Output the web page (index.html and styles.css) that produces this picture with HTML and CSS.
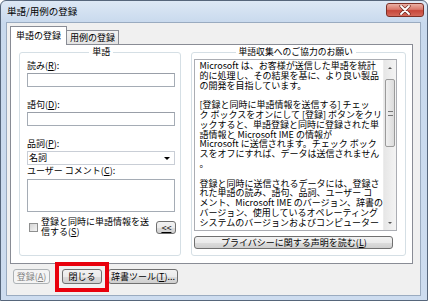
FILE: index.html
```html
<!DOCTYPE html>
<html lang="ja">
<head>
  <meta charset="UTF-8">
  <title>単語/用例の登録</title>
  <link rel="stylesheet" href="styles.css">
</head>
<body>

  <!-- Dialog window -->
  <div class="window">
    <div class="titlebar">
      <span class="title">単語/用例の登録</span>
      <button class="close-btn">
        <svg width="12" height="10" viewBox="0 0 12 10">
          <path d="M2 1 L10 9 M10 1 L2 9" stroke="#6b2a22" stroke-width="3.2" stroke-linecap="round"/>
          <path d="M2 1 L10 9 M10 1 L2 9" stroke="#fff" stroke-width="1.8" stroke-linecap="round"/>
        </svg>
      </button>
    </div>

    <div class="client">
      <!-- Tabs -->
      <div class="tabs">
        <div class="tab active">単語の登録</div>
        <div class="tab">用例の登録</div>
      </div>

      <div class="panel">
        <!-- Word group -->
        <fieldset class="group word-group">
          <legend>単語</legend>
          <label class="field-label">読み(<u>R</u>):</label>
          <input type="text" class="text-input">
          <label class="field-label">語句(<u>D</u>):</label>
          <input type="text" class="text-input">
          <label class="field-label">品詞(<u>P</u>):</label>
          <div class="combo"><span>名詞</span><span class="combo-arrow"></span></div>
          <label class="field-label">ユーザー コメント(<u>C</u>):</label>
          <textarea class="memo"></textarea>
          <div class="send-row">
            <span class="checkbox"></span>
            <span class="send-label">登録と同時に単語情報を送信する(<u>S</u>)</span>
            <button class="btn small-btn"><u>&lt;&lt;</u></button>
          </div>
        </fieldset>

        <!-- Info group -->
        <fieldset class="group info-group">
          <legend>単語収集へのご協力のお願い</legend>
          <div class="info-box">
            <div class="info-text">
              Microsoft は、お客様が送信した単語を統計<br>
              的に処理し、その結果を基に、より良い製品<br>
              の開発を目指しています。<br>
              <br>
              [登録と同時に単語情報を送信する] チェッ<br>
              ク ボックスをオンにして [登録] ボタンをクリ<br>
              ックすると、単語登録と同時に登録された単<br>
              語情報と Microsoft IME の情報が<br>
              Microsoft に送信されます。チェック ボック<br>
              スをオフにすれば、データは送信されません<br>
              。<br>
              <br>
              登録と同時に送信されるデータには、登録さ<br>
              れた単語の読み、語句、品詞、ユーザー コ<br>
              メント、Microsoft IME のバージョン、辞書の<br>
              バージョン、使用しているオペレーティング<br>
              システムのバージョンおよびコンピューター
            </div>
            <div class="scrollbar">
              <div class="sb-arrow up"></div>
              <div class="sb-track"><div class="sb-thumb"></div></div>
              <div class="sb-arrow down"></div>
            </div>
          </div>
          <button class="btn privacy-btn">プライバシーに関する声明を読む(<u>L</u>)</button>
        </fieldset>
      </div>

      <!-- Bottom buttons -->
      <div class="actions">
        <button class="btn register-btn" disabled>登録(<u>A</u>)</button>
        <button class="btn close-dialog-btn">閉じる</button>
        <button class="btn tools-btn">辞書ツール(<u>T</u>)...</button>
      </div>
    </div>

    <!-- Red annotation box -->
    <div class="highlight"></div>
  </div>

</body>
</html>
```

FILE: styles.css
```css
body {
  margin: 0;
  font-family: "Noto Sans CJK JP", "Liberation Sans", sans-serif;
  font-size: 9px;
  color: #000;
  background: #fff;
}

u {
  text-decoration-thickness: 1px;
  text-underline-offset: 1px;
}

.window {
  position: relative;
  width: 428px;
  height: 301px;
  box-sizing: border-box;
  border: 1px solid #56667b;
  border-radius: 6px 6px 0 0;
  background: linear-gradient(#dde8f5, #c8d9ed 22px, #cddcef);
  display: flex;
  flex-direction: column;
}

.titlebar {
  height: 21px;
  display: flex;
  justify-content: space-between;
  align-items: flex-start;
  padding: 0 3px 0 6px;
}

.title {
  margin-top: 5px;
  font-size: 9.5px;
  line-height: 11px;
}

.close-btn {
  width: 38px;
  height: 14px;
  margin-top: 2px;
  padding: 0;
  border: 1px solid #7c3027;
  border-radius: 3px;
  background: linear-gradient(#eab0a4, #d9786b 45%, #c7473a 55%, #d4695a);
  display: flex;
  align-items: center;
  justify-content: center;
}

.client {
  flex: 1;
  margin: 0 6px 4px 5px;
  border: 1px solid #9aabc0;
  background: #f0f0f0;
  display: flex;
  flex-direction: column;
}

/* Tabs */
.tabs {
  position: relative;
  z-index: 1;
  display: flex;
  align-items: flex-end;
  margin: 3px 0 -1px 3px;
}

.tab {
  height: 13px;
  line-height: 13px;
  padding: 0 3px;
  margin: 0 0 1px -1px;
  border: 1px solid #898c95;
  border-bottom: 0;
  background: linear-gradient(#f3f3f3, #e3e3e3);
}

.tab.active {
  height: 18px;
  line-height: 17px;
  padding: 0 5px;
  margin: 0;
  background: #fff;
}

.panel {
  height: 216px;
  margin: 0 7px 0 3px;
  border: 1px solid #898c95;
  background: #fff;
  display: flex;
  gap: 10px;
  padding: 2px 6px 0 8px;
}

/* Group boxes */
.group {
  box-sizing: border-box;
  height: 209px;
  margin: 0;
  border: 1px solid #d5dfe5;
  border-radius: 3px;
}

.group legend {
  margin: 0 auto;
  padding: 0 3px;
  line-height: 10px;
}

.word-group {
  width: 168px;
  padding: 4px 5px 0 7px;
}

.info-group {
  width: 208px;
  padding: 2px 8px 0 2px;
}

.info-group legend {
  font-size: 8.8px;
}

.field-label {
  display: block;
  height: 10px;
  line-height: 10px;
  margin-bottom: 2px;
}

.text-input {
  display: block;
  box-sizing: border-box;
  width: 100%;
  height: 14px;
  margin: 0 0 13px;
  border: 1px solid #a5acb5;
  border-top-color: #999fa8;
  padding: 0;
}

.combo {
  box-sizing: border-box;
  height: 14px;
  margin-bottom: 1px;
  border: 1px solid #c9ced6;
  display: flex;
  justify-content: space-between;
  align-items: center;
  padding: 0 4px 0 1px;
  line-height: 12px;
}

.combo-arrow {
  width: 0;
  height: 0;
  border-left: 3px solid transparent;
  border-right: 3px solid transparent;
  border-top: 3px solid #000;
}

.memo {
  display: block;
  box-sizing: border-box;
  width: 100%;
  height: 33px;
  margin: 3px 0 0;
  border: 1px solid #a5acb5;
  resize: none;
  padding: 0;
}

.send-row {
  display: flex;
  align-items: center;
  margin-top: 5px;
  padding-left: 2px;
}

.checkbox {
  box-sizing: border-box;
  width: 9px;
  height: 9px;
  border: 1px solid #8e8f8f;
  background: linear-gradient(135deg, #d4d4d4, #f4f4f4);
  margin-right: 3px;
}

.send-label {
  width: 110px;
  line-height: 10px;
}

/* Buttons */
.btn {
  box-sizing: border-box;
  font-family: inherit;
  font-size: 9px;
  line-height: 11px;
  padding: 0;
  border: 1px solid #707070;
  border-radius: 3px;
  background: linear-gradient(#f2f2f2 0, #ebebeb 50%, #dddddd 51%, #cfcfcf 100%);
  color: #000;
}

.btn:disabled {
  border-color: #adb2b5;
  background: #f4f4f4;
  color: #838383;
}

.small-btn {
  width: 20px;
  height: 13px;
  margin-left: auto;
  margin-right: -1px;
}

.info-box {
  box-sizing: border-box;
  height: 172px;
  border: 1px solid #abadb3;
  display: flex;
}

.info-text {
  flex: 1;
  overflow: hidden;
  white-space: nowrap;
  padding: 1px 0 0 4px;
  line-height: 9.8px;
}

.scrollbar {
  width: 12px;
  display: flex;
  flex-direction: column;
  background: linear-gradient(90deg, #e6e6e6, #f4f4f4);
  border-left: 1px solid #ececec;
}

.sb-arrow {
  height: 15px;
  display: flex;
  align-items: center;
  justify-content: center;
}

.sb-arrow::after {
  content: "";
  border-left: 2px solid transparent;
  border-right: 2px solid transparent;
}

.sb-arrow.up::after {
  border-bottom: 2px solid #555;
}

.sb-arrow.down::after {
  border-top: 2px solid #555;
}

.sb-track {
  flex: 1;
  padding-top: 4px;
}

.sb-thumb {
  box-sizing: border-box;
  height: 68px;
  margin: 0 1px;
  border: 1px solid #9b9b9b;
  border-radius: 2px;
  background: linear-gradient(90deg, #f0f0f0, #dcdcdc);
  display: flex;
  align-items: center;
  justify-content: center;
}

.sb-thumb::after {
  content: "";
  width: 5px;
  height: 3px;
  border-top: 1px solid #777;
  border-bottom: 1px solid #777;
}

.privacy-btn {
  display: block;
  width: 199px;
  height: 13px;
  margin-top: 5px;
}

/* Bottom buttons */
.actions {
  display: flex;
  margin: 5px 0 0 6px;
}

.actions .btn {
  height: 15px;
}

.register-btn {
  width: 37px;
}

.close-dialog-btn {
  width: 40px;
  margin-left: 12px;
}

.tools-btn {
  width: 70px;
  margin-left: 6px;
}

.highlight {
  position: absolute;
  left: 54px;
  top: 261px;
  width: 54px;
  height: 30px;
  box-sizing: border-box;
  border: 4px solid #e8000c;
}
```
